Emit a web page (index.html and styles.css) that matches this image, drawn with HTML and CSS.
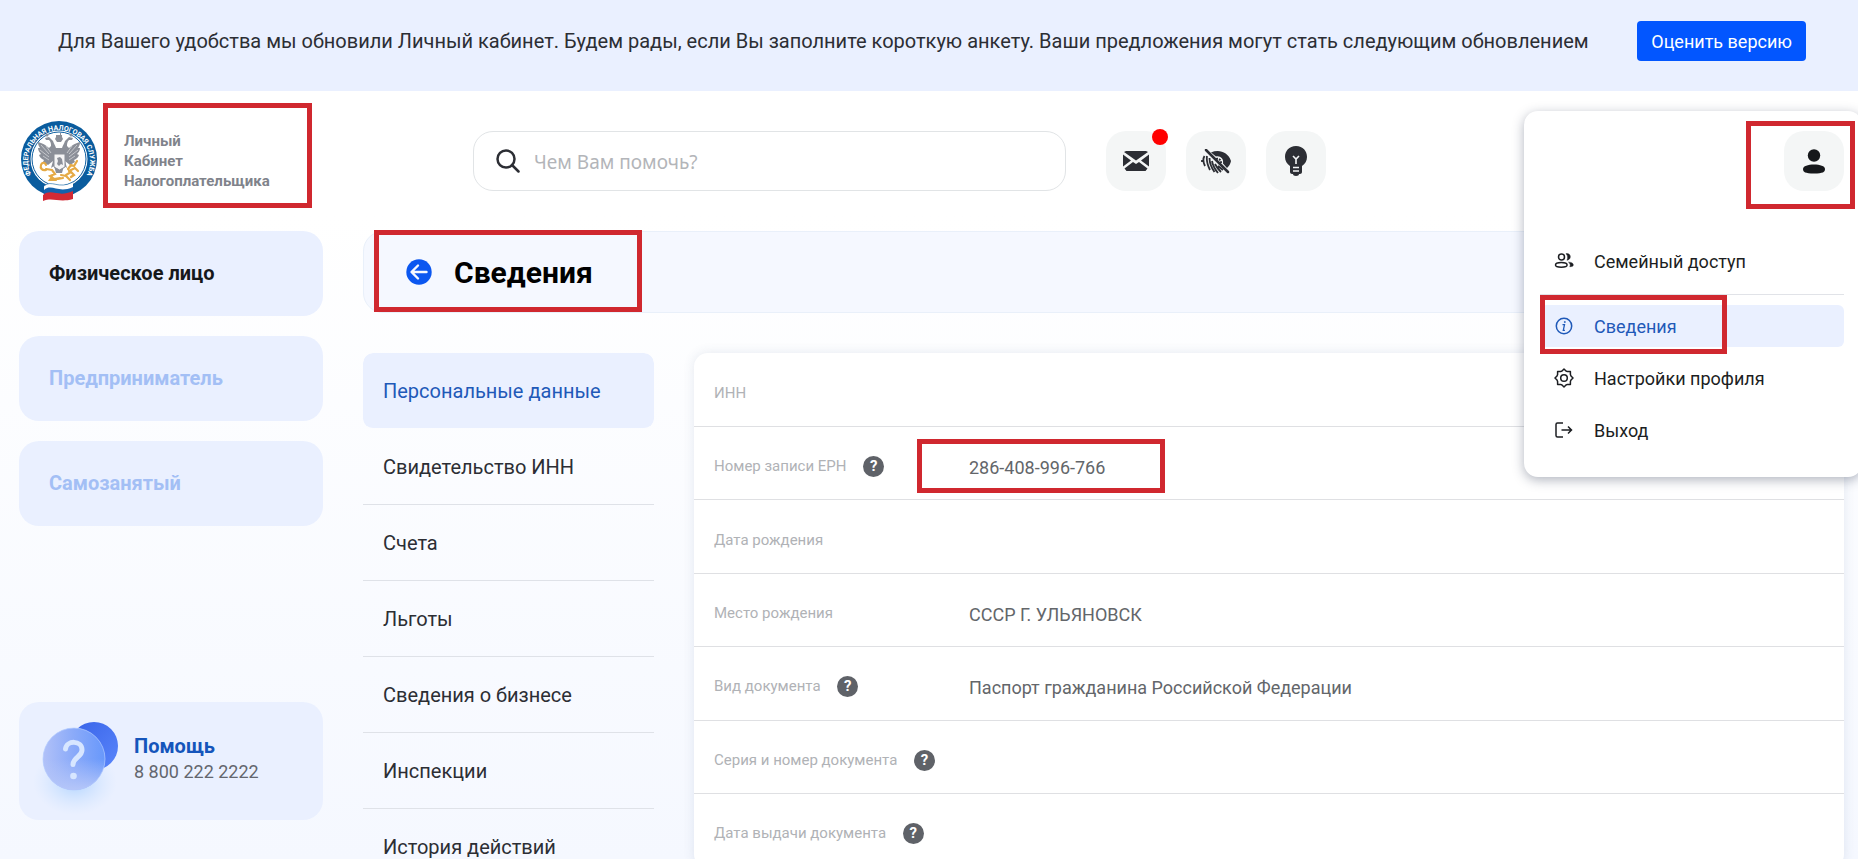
FILE: index.html
```html
<!doctype html>
<html lang="ru">
  <head>
    <meta charset="UTF-8" />
    <meta name="viewport" content="width=device-width, initial-scale=1.0" />
    <title>Сведения</title>
    <link rel="stylesheet" href="styles.css">
  </head>
  <body>
    <div class="banner">
      <p class="banner-text">Для Вашего удобства мы обновили Личный кабинет. Будем рады, если Вы заполните короткую анкету. Ваши предложения могут стать следующим обновлением</p>
      <button class="banner-button" type="button">Оценить версию</button>
    </div>

    <header class="header">
      <a class="brand" href="#">
        <svg class="logo" viewBox="0 0 76 80" aria-hidden="true">
          <defs>
            <path id="ring" d="M16.500 62.500A31 31 0 1 1 59.500 62.500" />
          </defs>
          <circle cx="38" cy="38" r="38" fill="#0a5c9e" />
          <circle cx="38" cy="38" r="28.500" fill="#fff" />
          <circle cx="38" cy="38" r="27" fill="none" stroke="#0a5c9e" stroke-width="1" />
          <text class="logo-text"><textPath href="#ring" startOffset="50%" text-anchor="middle">ФЕДЕРАЛЬНАЯ НАЛОГОВАЯ СЛУЖБА</textPath></text>
          <g fill="#8b8f98">
            <path d="M37 14h2v-2h1v2h1v2l1 2-2 3h-4l-2-3 1-2v-2h2z" />
            <path d="M35 27c-1-3-2-4-3-7l-4-4-4 1 1 2 3 0c2 2 2 4 2 6l-2 2c-3-3-7-5-11-6 0 3 1 4 2 6l-2 0c0 3 2 5 3 6l-2 1c1 3 3 4 5 5l-1 2 5 3 5-4-2 7 3-2 2 7h6l2-7 3 2-2-7 5 4 5-3-1-2c2-1 4-2 5-5l-2-1c1-1 3-3 3-6l-2 0c1-2 2-3 2-6-4 1-8 3-11 6l-2-2c0-2 0-4 2-6l3 0 1-2-4-1-4 4c-1 3-2 4-3 7z" />
            <circle cx="26" cy="14" r="1.500" /><circle cx="50" cy="14" r="1.500" />
          </g>
          <g stroke="#fff" stroke-width=".5" fill="none">
            <path d="M20 24l8 9M19 29l9 7M22 35l6 4M56 24l-8 9M57 29l-9 7M54 35l-6 4M25 25l5 7M51 25l-5 7" />
          </g>
          <path d="M33 33h11v13l-5.500 3-5.500-3z" fill="#f4f4f5" stroke="#8b8f98" />
          <path d="M36 37l3-1 2 2 1 6-2-1-2 2-2-2 1-3z" fill="#8b8f98" />
          <g fill="none" stroke="#e5aa45" stroke-width="2.200" stroke-linecap="round">
            <path d="M25 49c-4 1-6-2-5-5s4-3 5 0M25 48l6 1 3 4-5 2 4 3 6-1M31 56l-2 3 6 0M47 48l3-4 3 1 3-5M48 50l6-3 3 3M45 54l5-3 3 3-3 2M40 54l5 1 4 4M37 58l5-1" />
          </g>
          <path d="M23 65c8-7 14 4 29-4v13c-14 8-20-3-29 4z" fill="#fff" />
          <path d="M23 69c8-7 14 4 29-3v5c-14 7-20-3-29 3z" fill="#1462ad" />
          <path d="M22 74c9-7 15 3 30-4v8c-14 4-20-2-30 2z" fill="#d32a35" />
          <path d="M23 65c8-7 14 4 29-4" fill="none" stroke="#0a5c9e" stroke-width=".6" />
        </svg>
        <span class="brand-name">Личный<br>Кабинет<br>Налогоплательщика<span class="frame frame-brand"></span></span>
      </a>

      <div class="search">
        <svg class="search-icon" viewBox="0 0 24 24" aria-hidden="true"><circle cx="10" cy="10" r="8.500" /><path d="M16 16l6.500 6.500" /></svg>
        <input class="search-input" type="text" placeholder="Чем Вам помочь?" aria-label="Поиск" />
      </div>

      <div class="tools">
        <button class="tool" type="button" aria-label="Сообщения">
          <svg width="26" height="20" viewBox="0 0 26 20" fill="#2c2e34" aria-hidden="true"><path d="M3 0h20l2 1-12 8.500L1 1zM0 3.500L8 9.500 0 15.500zM26 3.500v12l-8-6zM1.500 17.500L10 11l3 2 3-2 8.500 6.500-2 2.500h-19z" /></svg>
          <span class="badge"></span>
        </button>
        <button class="tool" type="button" aria-label="Версия для слабовидящих">
          <svg width="30" height="25" viewBox="0 0 30 25" aria-hidden="true">
            <path d="M10 3.500C18 0 27 3 30 12c-.5 3-2 5-4 7l-4-4.500c1-5-3-8-7-7z" fill="#2c2e34" />
            <path d="M15 10c3-1 5 1 5 4" fill="none" stroke="#2c2e34" stroke-width="2" stroke-dasharray="2 1" />
            <path d="M3.500 7Q1 11 4 17M6 7q-1 6 3 14M8.500 9q0 7 5 14M11 12q1 6 6 12M14 15q2 4 6 8M17 17l5 4M1 11v2" stroke="#2c2e34" stroke-width="1.800" fill="none" />
            <path d="M5 1l22 22" stroke="#2c2e34" stroke-width="2.500" stroke-linecap="round" />
          </svg>
        </button>
        <button class="tool" type="button" aria-label="Подсказки">
          <svg width="24" height="30" viewBox="0 0 24 30" aria-hidden="true">
            <path d="M12 0c7 0 11 5 11 11 0 4-2 7-5 9v6c0 1-1 2-2 2h-1c0 1-1 2-3 2s-3-1-3-2H8c-1 0-2-1-2-2v-6c-3-2-5-5-5-9C1 5 5 0 12 0z" fill="#2c2e34" />
            <path d="M9 10l3 3 3-3M12 13v5M9 21.500h6M9 25h6" stroke="#f4f6f6" stroke-width="1.600" fill="none" />
          </svg>
        </button>
      </div>
    </header>

    <nav class="account-menu" aria-label="Профиль">
      <button class="tool account-button" type="button" aria-label="Профиль">
        <svg width="24" height="25" viewBox="0 0 24 25" fill="#16181b" aria-hidden="true"><circle cx="12" cy="6.500" r="6.200" /><path d="M1 20c0-3 5-4.500 11-4.500S23 17 23 20c0 3-2 4.500-11 4.500S1 23 1 20z" /></svg>
        <span class="frame frame-account"></span>
      </button>
      <a class="menu-item" href="#">
        <svg class="menu-icon" viewBox="0 0 20 20" aria-hidden="true">
          <circle cx="7.500" cy="6" r="3" /><path d="M1.500 14c0-1.500 2-2.500 5.800-2.500s5.800 1 5.800 2.500-2 2.200-5.800 2.200-5.800-.7-5.800-2.200z" />
          <path d="M12 2.700c5-1 6 5.500 1 6.600 1-2 1-5-1-6.600zM14.500 11.200c3 0 4.800 1 4.800 2.800 0 1-1 1.700-3.500 1.700 1-2 .2-3.500-1.300-4.500z" fill="currentColor" stroke-width=".5" />
        </svg>
        Семейный доступ
      </a>
      <hr class="menu-divider">
      <a class="menu-item active" href="#">
        <svg class="menu-icon" viewBox="0 0 20 20" aria-hidden="true"><circle cx="10" cy="10" r="7.700" /><path d="M8.500 8.700h2l-1.200 5.600h1.600" stroke-width="1.300" /><circle cx="10.800" cy="6" r=".6" fill="currentColor" stroke-width=".8" /></svg>
        Сведения
        <span class="frame frame-active"></span>
      </a>
      <a class="menu-item" href="#">
        <svg class="menu-icon" viewBox="0 0 20 20" aria-hidden="true"><circle cx="10" cy="10" r="3.300" /><path d="M8 3L10 1l2 2 1.500.6h2.900v2.900L17 8l2 2-2 2-.6 1.500v2.900h-2.900L12 17l-2 2-2-2-1.500-.6H3.600v-2.900L3 12l-2-2 2-2 .6-1.500V3.600h2.900z" stroke-linejoin="round" /></svg>
        Настройки профиля
      </a>
      <a class="menu-item" href="#">
        <svg class="menu-icon" viewBox="0 0 20 20" aria-hidden="true"><path d="M9 3H3.500Q2 3 2 4.500v11Q2 17 3.500 17H9M7.500 10H17M14 6.500L17.500 10 14 13.500" /></svg>
        Выход
      </a>
    </nav>

    <div class="layout">
      <aside class="sidebar">
        <a class="role current" href="#">Физическое лицо</a>
        <a class="role" href="#">Предприниматель</a>
        <a class="role" href="#">Самозанятый</a>
        <a class="help" href="#">
          <svg class="help-icon" viewBox="0 0 90 108" aria-hidden="true">
            <defs>
              <linearGradient id="back" x1="0" y1="0" x2="1" y2="1"><stop offset="0" stop-color="#3863e8" /><stop offset="1" stop-color="#5a86fb" /></linearGradient>
              <linearGradient id="front" x1="0" y1="0" x2="1" y2="0"><stop offset="0" stop-color="#b1c1f8" /><stop offset=".5" stop-color="#8aaaf9" /><stop offset="1" stop-color="#6898fb" /></linearGradient>
              <linearGradient id="fade" x1="0" y1="0" x2="0" y2="1"><stop offset=".5" stop-color="#b5c6f9" stop-opacity="0" /><stop offset="1" stop-color="#b5c6f9" /></linearGradient>
              <radialGradient id="glow"><stop offset="0" stop-color="#a9d0ff" stop-opacity=".9" /><stop offset="1" stop-color="#cfe3ff" stop-opacity="0" /></radialGradient>
            </defs>
            <ellipse cx="44" cy="75" rx="42" ry="33" fill="url(#glow)" />
            <circle cx="63" cy="39" r="24" fill="url(#back)" />
            <circle cx="43" cy="52" r="31" fill="url(#front)" stroke="#b3ccff" stroke-width=".7" />
            <circle cx="43" cy="52" r="31" fill="url(#fade)" />
            <path d="M34.500 42c1-9 16.500-9 16.500 1 0 7-8.500 7-9 14.500" fill="none" stroke="#d7e6ff" stroke-width="5" stroke-linecap="round" />
            <circle cx="42.500" cy="69" r="3.300" fill="#d7e6ff" />
          </svg>
          <span class="help-text"><strong>Помощь</strong><span>8 800 222 2222</span></span>
        </a>
      </aside>

      <main class="content">
        <div class="page-title">
          <button class="back" type="button" aria-label="Назад">
            <svg width="26" height="26" viewBox="0 0 26 26" aria-hidden="true"><circle cx="13" cy="13" r="12.700" fill="#0b57f0" /><path d="M20.500 13H6M12 6.500L5.500 13l6.500 6.500" fill="none" stroke="#f5f8ff" stroke-width="2.400" stroke-linecap="round" stroke-linejoin="round" /></svg>
          </button>
          <h1>Сведения</h1>
          <span class="frame frame-title"></span>
        </div>

        <div class="columns">
          <nav class="sections" aria-label="Разделы">
            <a class="section active" href="#">Персональные данные</a>
            <a class="section" href="#">Свидетельство ИНН</a>
            <a class="section" href="#">Счета</a>
            <a class="section" href="#">Льготы</a>
            <a class="section" href="#">Сведения о бизнесе</a>
            <a class="section" href="#">Инспекции</a>
            <a class="section" href="#">История действий</a>
          </nav>

          <table class="details">
            <tr><th scope="row">ИНН</th><td></td></tr>
            <tr><th scope="row">Номер записи ЕРН <button class="hint" type="button" aria-label="Подсказка">?</button></th><td><span class="value">286-408-996-766<span class="frame frame-value"></span></span></td></tr>
            <tr><th scope="row">Дата рождения</th><td></td></tr>
            <tr><th scope="row">Место рождения</th><td>СССР Г. УЛЬЯНОВСК</td></tr>
            <tr><th scope="row">Вид документа <button class="hint" type="button" aria-label="Подсказка">?</button></th><td>Паспорт гражданина Российской Федерации</td></tr>
            <tr><th scope="row">Серия и номер документа <button class="hint" type="button" aria-label="Подсказка">?</button></th><td></td></tr>
            <tr><th scope="row">Дата выдачи документа <button class="hint" type="button" aria-label="Подсказка">?</button></th><td></td></tr>
          </table>
        </div>
      </main>
    </div>
  </body>
</html>
```
FILE: styles.css
```css
* {
  box-sizing: border-box;
}
body {
  position: relative;
  display: flex;
  flex-direction: column;
  height: 100vh;
  margin: 0;
  overflow: hidden;
  font-family: Roboto, sans-serif;
  font-size: 18px;
  color: #2c2e34;
  background: linear-gradient(#fff 25%, #f5f8ff);
}
a {
  color: inherit;
  text-decoration: none;
}
button {
  padding: 0;
  border: none;
  font-family: inherit;
  cursor: pointer;
}

/* red highlight frames */
.frame {
  position: absolute;
  z-index: 5;
  border: 5px solid #d0282f;
  pointer-events: none;
}
.frame-brand {
  inset: -28px -42px -17px -21px;
}
.frame-account {
  inset: -10px -11px -18px -38px;
}
.frame-active {
  top: -10px;
  bottom: -7px;
  left: 0;
  width: 187px;
}
.frame-title {
  top: -2px;
  bottom: 0;
  left: 10px;
  width: 268px;
}
.frame-value {
  inset: -18px -60px -15px -52px;
}

.banner {
  display: flex;
  align-items: flex-start;
  justify-content: space-between;
  flex-shrink: 0;
  height: 91px;
  padding: 21px 52px 0 58px;
  background-color: #eaf0ff;
}
.banner-text {
  margin: 0;
  font-size: 20px;
  line-height: 40px;
  white-space: nowrap;
}
.banner-button {
  height: 40px;
  padding: 0 14px;
  border-radius: 4px;
  background-color: #0256ff;
  color: #fff;
  font-size: 18px;
}

.header {
  display: flex;
  align-items: center;
  flex-shrink: 0;
  height: 140px;
  padding: 0 14px 0 21px;
}
.brand {
  display: flex;
  align-items: center;
  gap: 27px;
  width: 452px;
}
.logo {
  width: 76px;
  height: 80px;
}
.logo-text {
  font-size: 7px;
  font-weight: 700;
  fill: #fff;
}
.brand-name {
  position: relative;
  color: #80838b;
  font-size: 15px;
  font-weight: 700;
  line-height: 20px;
}
.search {
  display: flex;
  align-items: center;
  flex: 0 1 593px;
  height: 60px;
  padding: 0 22px;
  gap: 14px;
  border: 1px solid #e1e4e6;
  border-radius: 20px;
  background-color: #fff;
}
.search-icon {
  width: 24px;
  height: 24px;
  fill: none;
  stroke: #2c2e34;
  stroke-width: 2.5;
  stroke-linecap: round;
}
.search-input {
  flex: 1;
  min-width: 0;
  padding: 2px 0 0;
  border: none;
  outline: none;
  background: none;
  font-family: "Noto Sans", sans-serif;
  font-size: 19px;
}
.search-input::placeholder {
  color: #b3b5b9;
}
.tools {
  display: flex;
  gap: 20px;
  margin-left: 40px;
}
.tool {
  position: relative;
  display: flex;
  align-items: center;
  justify-content: center;
  width: 60px;
  height: 60px;
  border-radius: 20px;
  background-color: #f4f6f6;
}
.badge {
  position: absolute;
  top: -2px;
  right: -2px;
  width: 16px;
  height: 16px;
  border-radius: 50%;
  background-color: #f00;
}

.account-menu {
  position: absolute;
  top: 111px;
  right: -4px;
  z-index: 2;
  display: flex;
  flex-direction: column;
  gap: 10px;
  width: 338px;
  padding: 20px 18px 26px 16px;
  border-radius: 14px;
  background-color: #fff;
  box-shadow: 0 3px 12px rgba(30, 40, 70, 0.35);
}
.account-button {
  align-self: flex-end;
  margin-bottom: 39px;
}
.menu-item {
  position: relative;
  display: flex;
  align-items: center;
  gap: 20px;
  height: 42px;
  padding-left: 14px;
  border-radius: 6px;
  color: #1c1e22;
}
.menu-item.active {
  background-color: #eaf0ff;
  color: #1f59b8;
}
.menu-icon {
  width: 20px;
  height: 20px;
  fill: none;
  stroke: currentColor;
  stroke-width: 1.5;
}
.menu-divider {
  width: 100%;
  margin: 2px 0 0;
  border: none;
  border-top: 1px solid #e1e3e8;
}

.layout {
  display: flex;
  flex: 1;
  gap: 40px;
  min-height: 0;
  padding: 0 14px 0 19px;
}
.sidebar {
  display: flex;
  flex-direction: column;
  flex-shrink: 0;
  gap: 20px;
  width: 304px;
  padding-bottom: 39px;
}
.role {
  padding: 0 30px;
  border-radius: 20px;
  background-color: #eaf0ff;
  color: #a3bff5;
  font-size: 20px;
  font-weight: 700;
  line-height: 85px;
}
.role.current {
  color: #16181b;
}
.help {
  display: flex;
  align-items: center;
  height: 118px;
  margin-top: auto;
  padding-left: 12px;
  border-radius: 20px;
  background-color: #eaf0ff;
}
.help-icon {
  width: 90px;
  height: 108px;
}
.help-text {
  display: flex;
  flex-direction: column;
  margin: 0 0 4px 13px;
  color: #63666e;
  line-height: 25px;
}
.help-text strong {
  color: #1555bb;
  font-size: 20px;
}

.content {
  flex: 1;
  min-width: 0;
}
.page-title {
  position: relative;
  display: flex;
  align-items: center;
  gap: 22px;
  height: 82px;
  padding-left: 42px;
  border: 1px solid #e9f0fa;
  border-radius: 20px;
  background-color: #f5f8ff;
}
.page-title h1 {
  margin: 0;
  color: #000;
  font-size: 30px;
}
.back {
  display: flex;
  background: none;
}
.columns {
  display: flex;
  align-items: flex-start;
  gap: 40px;
  margin-top: 40px;
}
.sections {
  flex-shrink: 0;
  width: 291px;
}
.section {
  display: block;
  height: 76px;
  padding: 0 20px;
  border-bottom: 1px solid #dfe2e8;
  font-size: 20px;
  line-height: 76px;
}
.section.active {
  border-bottom-color: transparent;
  border-radius: 10px;
  background-color: #eaf0ff;
  background-clip: padding-box;
  color: #1f59b8;
}

.details {
  flex: 1;
  border-spacing: 0;
  border-radius: 14px;
  background-color: #fff;
  box-shadow: 0 0 12px rgba(60, 80, 120, 0.12);
}
.details th,
.details td {
  height: 73px;
  padding: 6px 0 0;
  border-bottom: 1px solid #dfe0e3;
  text-align: left;
}
.details tr:nth-child(odd) th {
  height: 74px;
}
.details th {
  width: 275px;
  padding-left: 20px;
  color: #b0b2b6;
  font-size: 15px;
  font-weight: 400;
}
.details td {
  padding-top: 8px;
  color: #63666a;
}
.value {
  position: relative;
}
.hint {
  width: 21px;
  height: 21px;
  margin-left: 13px;
  border-radius: 50%;
  background-color: #5f6268;
  color: #fff;
  font-size: 15px;
  font-weight: 700;
  line-height: 21px;
}
```
